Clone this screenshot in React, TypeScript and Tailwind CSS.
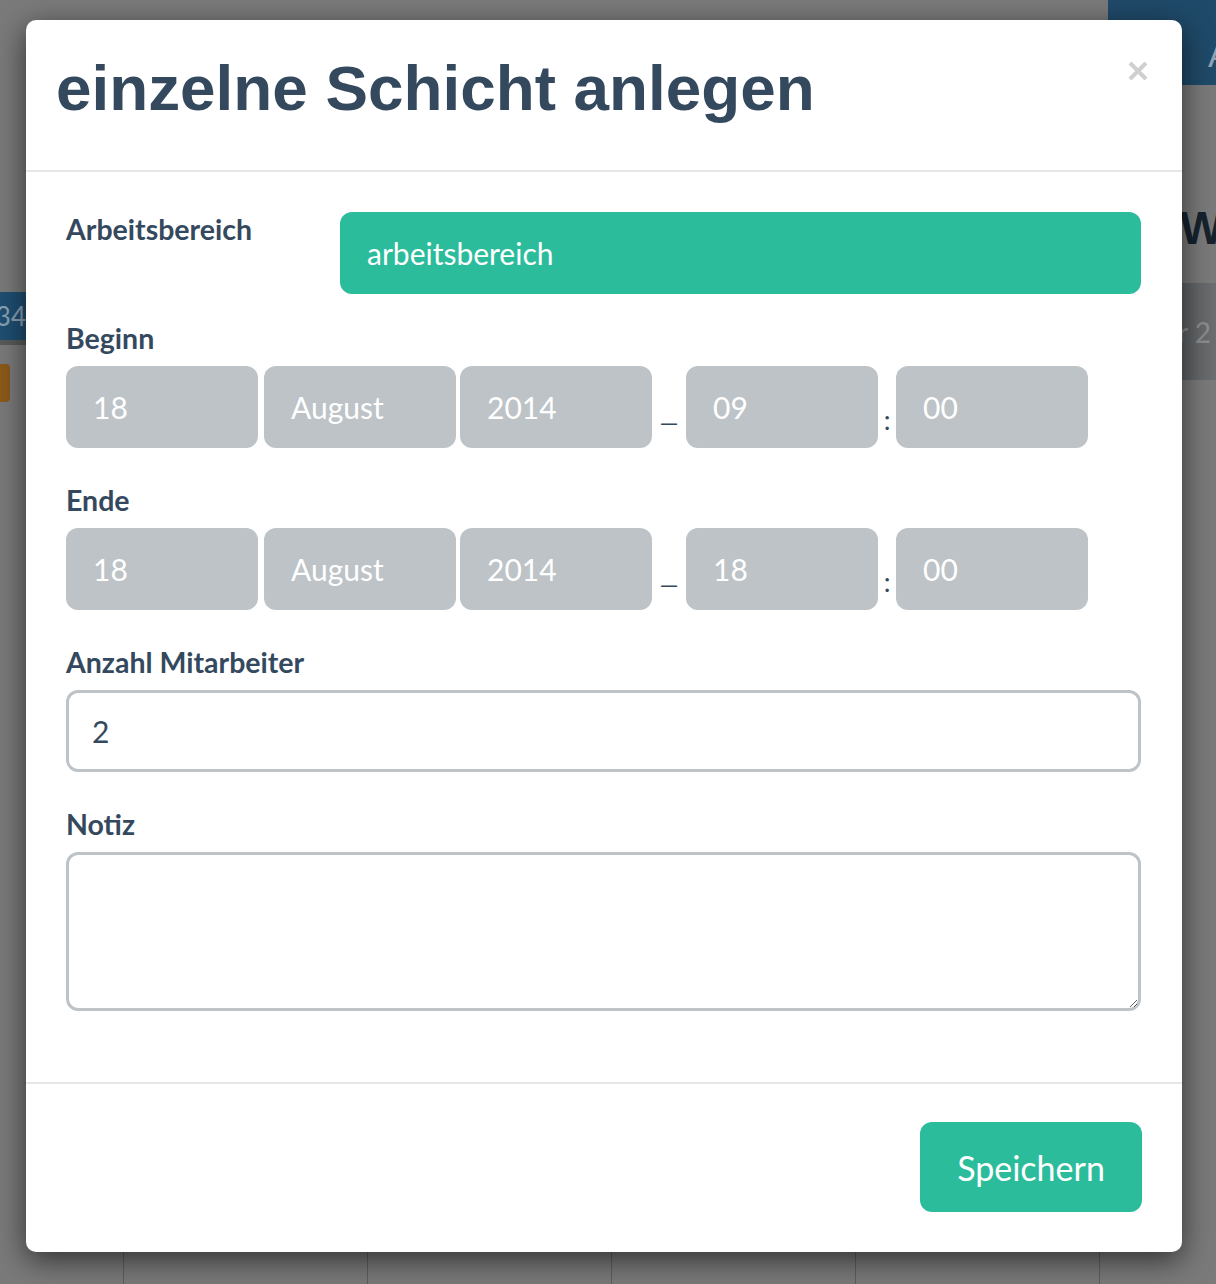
import React from 'react'

const beginn = ['18', 'August', '2014', '09', '00']
const ende = ['18', 'August', '2014', '18', '00']

function GrayField({ value }: { value: string }) {
  return (
    <div className="flex h-[82px] w-[192px] items-center rounded-[12px] bg-[#bdc3c7] pl-[27px] text-[30px] text-white">
      {value}
    </div>
  )
}

function DateRow({ values }: { values: string[] }) {
  return (
    <div className="flex items-stretch">
      <GrayField value={values[0]} />
      <div className="w-[6px]" />
      <GrayField value={values[1]} />
      <div className="w-[4px]" />
      <GrayField value={values[2]} />
      <div className="flex w-[34px] items-end justify-center pb-[14px] text-[24px] leading-none text-[#34495e]">—</div>
      <GrayField value={values[3]} />
      <div className="flex w-[18px] items-end justify-center pb-[15px] text-[27px] leading-none text-[#34495e]">:</div>
      <GrayField value={values[4]} />
    </div>
  )
}

function Label({ children }: { children: React.ReactNode }) {
  return <div className="mb-[8px] h-[40px] text-[28.5px] font-bold leading-[40px] text-[#34495e]">{children}</div>
}

export default function App() {
  return (
    <div className="relative h-[1284px] w-[1216px] overflow-hidden bg-[#7a7a7a] font-['Lato',sans-serif]">
      {/* page behind the overlay */}
      <div className="flex h-full flex-col">
        <div className="flex h-[85px] shrink-0 justify-end">
          <div className="w-[108px] bg-[#1f4a69] pl-[100px] pt-[28px] text-[34px] text-[#8fa5b5]">A</div>
        </div>
        <div className="flex h-[198px] shrink-0 items-end justify-end pb-[32px]">
          <div className="w-[36px] font-['Liberation_Sans',sans-serif] text-[46px] font-bold leading-none text-[#17222d]">W</div>
        </div>
        <div className="flex h-[97px] shrink-0 justify-between">
          <div className="flex w-[30px] flex-col pt-[9px]">
            <div className="flex h-[48px] shrink-0 items-center justify-end bg-[#1f4f72] pr-[4px] text-[26px] text-[#8aa2b4]">34</div>
            <div className="h-[5px] shrink-0 bg-[#5a5a5a]" />
            <div className="mt-[19px] h-[38px] w-[10px] shrink-0 rounded-r-[4px] bg-[#8a5a18]" />
          </div>
          <div className="flex w-[56px] items-center bg-gradient-to-r from-[#55585b] to-[#6c6e70] pl-[18px] text-[28px] text-[#8b8d8f]">r 2</div>
        </div>
        <div className="flex-1" />
        <div className="flex h-[33px] shrink-0">
          <div className="w-[123px]" />
          <div className="w-[244px] border-l border-[#5e605f]" />
          <div className="w-[244px] border-l border-[#5e605f]" />
          <div className="w-[244px] border-l border-[#5e605f]" />
          <div className="w-[244px] border-l border-[#5e605f]" />
          <div className="flex-1 border-l border-[#5e605f]" />
        </div>
      </div>

      {/* modal */}
      <div className="absolute inset-0 pl-[26px] pt-[20px]">
        <div className="flex w-[1156px] flex-col rounded-[10px] bg-white shadow-[0_8px_30px_rgba(0,0,0,0.6)]">
          <div className="flex items-start justify-between border-b-2 border-[#e6e7e8] pb-[46px] pl-[30px] pr-[34px] pt-[32px]">
            <h1 className="font-['Liberation_Sans',sans-serif] text-[63.8px] font-bold leading-[72px] text-[#34495e]">
              einzelne Schicht anlegen
            </h1>
            <svg className="mt-[9px]" width="20" height="20" viewBox="0 0 20 20" aria-label="close">
              <path d="M2 2 L18 18 M18 2 L2 18" stroke="#cfcfcf" strokeWidth="4" strokeLinecap="butt" />
            </svg>
          </div>

          <div className="flex flex-col pb-[71px] pl-[40px] pr-[41px] pt-[40px]">
            <div className="flex">
              <div className="mt-[-3px] w-[274px] text-[28.5px] font-bold leading-[40px] text-[#34495e]">Arbeitsbereich</div>
              <div className="flex h-[82px] flex-1 items-center rounded-[12px] bg-[#2bbc9b] pl-[27px] text-[30px] text-white">
                arbeitsbereich
              </div>
            </div>

            <div className="mt-[24px]">
              <Label>Beginn</Label>
              <DateRow values={beginn} />
            </div>

            <div className="mt-[32px]">
              <Label>Ende</Label>
              <DateRow values={ende} />
            </div>

            <div className="mt-[32px]">
              <Label>Anzahl Mitarbeiter</Label>
              <input
                readOnly
                value="2"
                className="h-[82px] w-full rounded-[12px] border-[3px] border-[#bdc3c7] bg-white pl-[23px] text-[30px] text-[#34495e] outline-none"
              />
            </div>

            <div className="mt-[32px]">
              <Label>Notiz</Label>
              <textarea className="block h-[159px] w-full resize rounded-[12px] border-[3px] border-[#bdc3c7] bg-white p-[20px] text-[30px] text-[#34495e] outline-none" />
            </div>
          </div>

          <div className="flex justify-end border-t-2 border-[#e6e7e8] pb-[40px] pr-[40px] pt-[38px]">
            <button className="h-[90px] w-[222px] rounded-[12px] bg-[#2bbc9b] text-[34px] text-white">Speichern</button>
          </div>
        </div>
      </div>
    </div>
  )
}
